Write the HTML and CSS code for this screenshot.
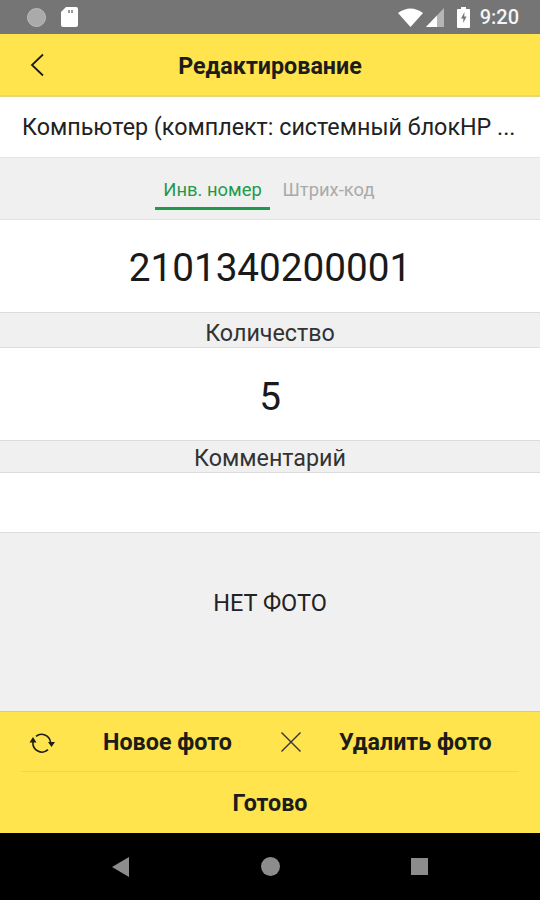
FILE: index.html
```html
<!doctype html>
<html lang="ru">
<head>
    <meta charset="UTF-8">
    <title>Редактирование</title>
    <link rel="stylesheet" href="styles.css">
</head>
<body>
    <div class="screen">
        <div class="status-bar">
            <div class="status-group">
                <span class="status-dot"></span>
                <svg class="status-sd" width="17" height="20" viewBox="0 0 17 20"><path d="M5 0h10a2 2 0 0 1 2 2v16a2 2 0 0 1-2 2H2a2 2 0 0 1-2-2V5z" fill="#fff"/><path d="M7 3h2v3H7zM10 3h2v3h-2z" fill="#999"/></svg>
            </div>
            <div class="status-group">
                <svg class="status-wifi" width="25" height="19" viewBox="0 0 25 19"><path d="M0 5Q12.500-4 25 5L12.500 19z" fill="#fff"/></svg>
                <svg class="status-signal" width="18" height="19" viewBox="0 0 18 19"><path d="M0 19L18 0v19z" fill="#b5b5b5"/><path d="M0 19L11 7.400V19z" fill="#fff"/></svg>
                <svg class="status-battery" width="13" height="21" viewBox="0 0 13 21"><path d="M4 0h5v2h3a1 1 0 0 1 1 1v17a1 1 0 0 1-1 1H1a1 1 0 0 1-1-1V3a1 1 0 0 1 1-1h3z" fill="#fff"/><path d="M7.500 5L4 11.500h2.300V16L9.500 9.500H7.200z" fill="#777"/></svg>
                <span class="status-time">9:20</span>
            </div>
        </div>

        <header class="app-bar">
            <svg class="back-icon" width="15" height="24" viewBox="0 0 15 24"><path d="M13 1.500L2 12l11 10.500" fill="none" stroke="#1c1c1c" stroke-width="1.800"/></svg>
            <h1 class="app-title">Редактирование</h1>
        </header>

        <div class="item-name">Компьютер (комплект: системный блокHP ...</div>

        <nav class="tabs">
            <div class="tab tab--active">Инв. номер</div>
            <div class="tab tab--next">Штрих-код</div>
        </nav>

        <div class="field field--number">2101340200001</div>
        <div class="caption caption--qty">Количество</div>
        <div class="field field--qty">5</div>
        <div class="caption caption--comment">Комментарий</div>
        <div class="field field--comment"></div>

        <div class="photo">НЕТ ФОТО</div>

        <div class="actions">
            <div class="actions-row">
                <div class="action action--new">
                    <svg width="26" height="24" viewBox="0 0 26 24"><path d="M21.500 12A9 9 0 0 0 7 6.300M4 12A9 9 0 0 0 19 19.700" fill="none" stroke="#1c1c1c" stroke-width="1.600"/><path d="M4 7l3.500 5.500h-7zM22.500 17L19 12h7z" fill="#1c1c1c"/></svg>
                    <span class="action-label">Новое фото</span>
                </div>
                <div class="action action--delete">
                    <svg width="22" height="22" viewBox="0 0 22 22"><path d="M1.500 1.500l19 19M20.500 1.500l-19 19" fill="none" stroke="#333" stroke-width="1.400"/></svg>
                    <span class="action-label">Удалить фото</span>
                </div>
            </div>
            <div class="done">Готово</div>
        </div>

        <div class="nav-bar">
            <svg width="18" height="20" viewBox="0 0 18 20"><path d="M17 0v20L0 10z" fill="#8c8c8c"/></svg>
            <span class="nav-home"></span>
            <span class="nav-recent"></span>
        </div>
    </div>
</body>
</html>
```

FILE: styles.css
```css
* {
    box-sizing: border-box;
}

body {
    margin: 0;
    background: #fff;
    font-family: Roboto, "Liberation Sans", sans-serif;
    color: #1c1c1c;
}

.screen {
    width: 540px;
    height: 900px;
    display: flex;
    flex-direction: column;
    overflow: hidden;
}

.status-bar {
    height: 34px;
    flex: none;
    background: #757575;
    display: flex;
    justify-content: space-between;
    align-items: center;
    padding: 0 21px 0 27px;
}

.status-group {
    display: flex;
    align-items: center;
}

.status-dot {
    width: 19px;
    height: 19px;
    border-radius: 50%;
    background: #aaa;
    border: 1px solid #bbb;
}

.status-sd {
    margin-left: 15px;
}

.status-signal {
    margin-left: 3px;
}

.status-battery {
    margin-left: 13px;
}

.status-time {
    margin-left: 10px;
    color: #f4f4f4;
    font-size: 20px;
    font-weight: 500;
}

.app-bar {
    height: 63px;
    flex: none;
    background: #ffe44d;
    border-bottom: 2px solid #e4d77a;
    display: flex;
    align-items: center;
    justify-content: center;
    padding-top: 2px;
    position: relative;
}

.back-icon {
    position: absolute;
    left: 30px;
    top: 19px;
}

.app-title {
    margin: 0;
    font-size: 23.3px;
    font-weight: 700;
}

.item-name {
    height: 60px;
    flex: none;
    display: flex;
    align-items: center;
    padding-left: 22px;
    font-size: 23.3px;
    white-space: nowrap;
    color: #222;
}

.tabs {
    height: 63px;
    flex: none;
    background: #f0f0f0;
    border-top: 1px solid #e4e4e4;
    border-bottom: 1px solid #e0e0e0;
    display: flex;
    padding-left: 155px;
}

.tab {
    width: 115px;
    padding-top: 21px;
    text-align: center;
    font-size: 18.4px;
    color: #aaa;
}

.tab--active {
    height: 52px;
    color: #1f9a4b;
    border-bottom: 3px solid #1f9a4b;
}

.tab--next {
    margin-left: 1px;
}

.field {
    background: #fff;
    flex: none;
    display: flex;
    align-items: center;
    justify-content: center;
    color: #1a1a1a;
}

.field--number {
    height: 92px;
    padding-top: 3px;
    font-size: 38.7px;
}

.field--qty {
    height: 92px;
    padding-top: 4px;
    font-size: 38.7px;
}

.field--comment {
    height: 59px;
}

.caption {
    flex: none;
    background: #f0f0f0;
    border-top: 1px solid #dcdcdc;
    border-bottom: 1px solid #dcdcdc;
    display: flex;
    align-items: center;
    justify-content: center;
    font-size: 23.3px;
    color: #333;
}

.caption--qty {
    height: 36px;
    padding-top: 6px;
}

.caption--comment {
    height: 33px;
    padding-top: 2px;
}

.photo {
    height: 179px;
    flex: none;
    background: #f0f0f0;
    border-top: 1px solid #dcdcdc;
    display: flex;
    align-items: center;
    justify-content: center;
    padding-bottom: 38px;
    font-size: 23.5px;
    color: #222;
}

.actions {
    height: 122px;
    flex: none;
    background: #ffe44d;
    border-top: 1px solid #e6d23a;
    padding: 0 21px;
}

.actions-row {
    height: 60px;
    display: flex;
    border-bottom: 1px solid #ecd94e;
}

.action {
    display: flex;
    align-items: center;
}

.action--new {
    width: 259px;
    padding-left: 8px;
}

.action--delete {
    flex: 1;
}

.action-label {
    font-size: 23.3px;
    font-weight: 700;
}

.action--new .action-label {
    margin-left: 48px;
}

.action--delete .action-label {
    margin-left: 37px;
}

.done {
    height: 61px;
    display: flex;
    align-items: center;
    justify-content: center;
    font-size: 23.3px;
    font-weight: 700;
}

.nav-bar {
    flex: 1;
    background: #000;
    display: flex;
    align-items: center;
    justify-content: space-between;
    padding: 0 112px 0 112px;
}

.nav-home {
    width: 19px;
    height: 19px;
    border-radius: 50%;
    background: #8c8c8c;
}

.nav-recent {
    width: 17px;
    height: 17px;
    background: #8c8c8c;
}
```
